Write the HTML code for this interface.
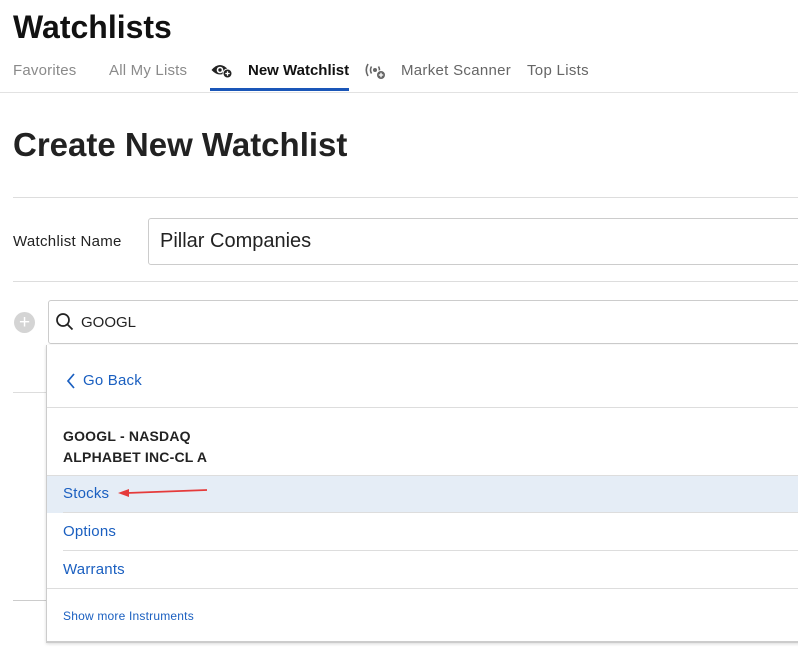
<!DOCTYPE html>
<html><head><style>
body{margin:0;width:798px;height:663px;overflow:hidden;background:#fff;font-family:"Liberation Sans",sans-serif;position:relative}
.a{position:absolute}
.blue{color:#1a5fc0}
</style></head><body>
<div class="a" style="left:13px;top:9px;font-size:32px;font-weight:bold;color:#111">Watchlists</div>
<div class="a" style="top:62px;left:13px;font-size:15px;color:#8a8a8a;letter-spacing:.2px">Favorites</div>
<div class="a" style="top:62px;left:109px;font-size:15px;color:#8a8a8a;letter-spacing:.2px">All My Lists</div>
<svg class="a" style="left:211px;top:62px" width="22" height="18" viewBox="0 0 22 18"><path d="M0.5 8 Q9 -2 17.5 8 Q9 17 0.5 8Z" fill="#222"/><circle cx="9" cy="8" r="3.3" fill="#fff"/><circle cx="9" cy="8" r="1.7" fill="#222"/><circle cx="16.5" cy="11.5" r="4.5" fill="#222" stroke="#fff" stroke-width="1"/><path d="M14.3 11.5h4.4M16.5 9.3v4.4" stroke="#fff" stroke-width="1.3"/></svg>
<div class="a" style="top:62px;left:248px;font-size:15px;font-weight:bold;color:#111">New Watchlist</div>
<div class="a" style="left:210px;top:88px;width:139px;height:3px;background:#1a56b8"></div>
<svg class="a" style="left:364px;top:61px" width="24" height="20" viewBox="0 0 24 20"><path d="M4 3 Q0.5 9 4 15M7.5 5.5 Q5.5 9 7.5 12.5" stroke="#666" fill="none" stroke-width="1.6"/><circle cx="11" cy="9" r="2" fill="#666"/><path d="M14.5 5.5 Q16.5 9 14.5 12.5" stroke="#666" fill="none" stroke-width="1.6"/><circle cx="17" cy="14" r="4.5" fill="#666" stroke="#fff" stroke-width="1"/><path d="M14.8 14h4.4M17 11.8v4.4" stroke="#fff" stroke-width="1.3"/></svg>
<div class="a" style="top:62px;left:401px;font-size:15px;color:#666;letter-spacing:.3px">Market Scanner</div>
<div class="a" style="top:62px;left:527px;font-size:15px;color:#666;letter-spacing:.3px">Top Lists</div>
<div class="a" style="left:0;top:92px;width:798px;height:1px;background:#e2e2e2"></div>
<div class="a" style="left:13px;top:126px;font-size:33px;font-weight:bold;color:#222">Create New Watchlist</div>
<div class="a" style="left:13px;top:197px;width:785px;height:1px;background:#ddd"></div>
<div class="a" style="left:13px;top:233px;font-size:15px;color:#222;letter-spacing:.3px">Watchlist Name</div>
<div class="a" style="left:148px;top:218px;width:660px;height:47px;border:1px solid #ccc;border-radius:3px;box-sizing:border-box"></div>
<div class="a" style="left:160px;top:230px;font-size:20px;color:#222">Pillar Companies</div>
<div class="a" style="left:13px;top:281px;width:785px;height:1px;background:#ddd"></div>
<div class="a" style="left:14px;top:312px;width:21px;height:21px;border-radius:50%;background:#d4d4d4;color:#fff;font-size:19px;line-height:21px;text-align:center">+</div>
<div class="a" style="left:48px;top:300px;width:760px;height:44px;border:1px solid #ccc;border-radius:3px;box-sizing:border-box"></div>
<svg class="a" style="left:55px;top:312px" width="20" height="20" viewBox="0 0 20 20"><circle cx="8" cy="8" r="6" stroke="#222" stroke-width="1.7" fill="none"/><path d="M12.5 12.5l5 5" stroke="#222" stroke-width="1.8"/></svg>
<div class="a" style="left:81px;top:314px;font-size:15px;color:#222">GOOGL</div>
<div class="a" style="left:13px;top:392px;width:34px;height:1px;background:#ddd"></div>
<div class="a" style="left:13px;top:600px;width:34px;height:1px;background:#ccc"></div>
<div class="a" style="left:46px;top:345px;width:760px;height:298px;border-left:1px solid #ccc;border-bottom:2px solid #ccc;box-shadow:0 1px 3px rgba(0,0,0,.15);background:#fff;box-sizing:border-box"></div>
<svg class="a" style="left:66px;top:373px" width="10" height="16" viewBox="0 0 10 16"><path d="M8 1L2 8l6 7" stroke="#1a5fc0" stroke-width="1.7" fill="none"/></svg>
<div class="a blue" style="left:83px;top:372px;font-size:15px;letter-spacing:.2px">Go Back</div>
<div class="a" style="left:47px;top:407px;width:751px;height:1px;background:#ddd"></div>
<div class="a" style="left:63px;top:426px;font-size:14px;font-weight:bold;color:#222;line-height:21px;letter-spacing:.2px">GOOGL - NASDAQ<br>ALPHABET INC-CL A</div>
<div class="a" style="left:47px;top:475px;width:751px;height:37px;background:#e5edf6;border-top:1px solid #ddd"></div>
<div class="a blue" style="left:63px;top:485px;font-size:15px;letter-spacing:.2px">Stocks</div>
<svg class="a" style="left:115px;top:486px" width="95" height="12" viewBox="0 0 95 12"><path d="M92 4 L12 7" stroke="#e53b3b" stroke-width="1.8"/><path d="M3 7 L14 3 L14 11Z" fill="#e53b3b"/></svg>
<div class="a" style="left:63px;top:512px;width:735px;height:1px;background:#ddd"></div>
<div class="a blue" style="left:63px;top:523px;font-size:15px;letter-spacing:.2px">Options</div>
<div class="a" style="left:63px;top:550px;width:735px;height:1px;background:#ddd"></div>
<div class="a blue" style="left:63px;top:561px;font-size:15px;letter-spacing:.2px">Warrants</div>
<div class="a" style="left:47px;top:588px;width:751px;height:1px;background:#ddd"></div>
<div class="a blue" style="left:63px;top:609px;font-size:12px;letter-spacing:.2px">Show more Instruments</div>
</body></html>
